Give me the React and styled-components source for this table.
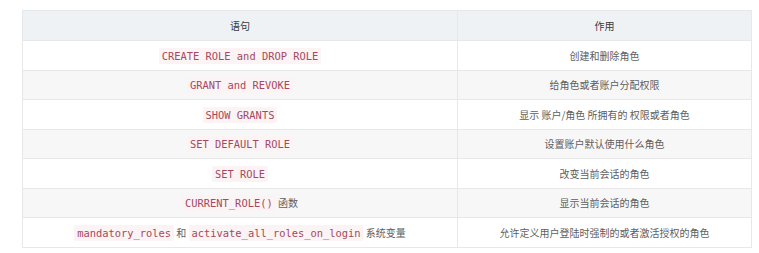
import React from 'react';
import styled, { createGlobalStyle } from 'styled-components';

const GlobalStyle = createGlobalStyle`
  html, body {
    margin: 0;
    padding: 0;
    background: #ffffff;
  }
  body {
    font-family: "Noto Sans CJK SC", "Noto Sans", sans-serif;
  }
`;

const Page = styled.div`
  padding: 10px 8px 0 22px;
`;

const Table = styled.table`
  width: 729px;
  border-collapse: collapse;
  table-layout: fixed;
  font-size: 10px;
  color: #5e5e5e;
`;

const HeadCell = styled.th`
  height: 29px;
  padding: 0 8px;
  background: #eff2f5;
  border: 1px solid #e6e9ec;
  font-weight: 400;
  color: #3a3a3a;
  text-align: center;
`;

const Row = styled.tr`
  background: ${(p) => (p.$striped ? '#f7f7f7' : '#ffffff')};
`;

const Cell = styled.td`
  height: 28.5px;
  padding: 0 8px;
  border: 1px solid #e8e8e8;
  text-align: center;
  white-space: nowrap;
`;

const Code = styled.code`
  font-family: "DejaVu Sans Mono", "Liberation Mono", monospace;
  font-size: 10.4px;
  color: #a6485f;
  background: #fbf3f4;
  padding: 2px 3px;
  border-radius: 2px;
`;

const rows = [
  { stmt: <Code>CREATE ROLE and DROP ROLE</Code>, use: '创建和删除角色' },
  { stmt: <Code>GRANT and REVOKE</Code>, use: '给角色或者账户分配权限' },
  { stmt: <Code>SHOW GRANTS</Code>, use: '显示 账户/角色 所拥有的 权限或者角色' },
  { stmt: <Code>SET DEFAULT ROLE</Code>, use: '设置账户默认使用什么角色' },
  { stmt: <Code>SET ROLE</Code>, use: '改变当前会话的角色' },
  {
    stmt: (
      <>
        <Code>CURRENT_ROLE()</Code> 函数
      </>
    ),
    use: '显示当前会话的角色',
  },
  {
    stmt: (
      <>
        <Code>mandatory_roles</Code> 和 <Code>activate_all_roles_on_login</Code> 系统变量
      </>
    ),
    use: '允许定义用户登陆时强制的或者激活授权的角色',
  },
];

const App = () => (
  <Page>
    <GlobalStyle />
    <Table>
      <colgroup>
        <col style={{ width: '435px' }} />
        <col style={{ width: '294px' }} />
      </colgroup>
      <thead>
        <tr>
          <HeadCell>语句</HeadCell>
          <HeadCell>作用</HeadCell>
        </tr>
      </thead>
      <tbody>
        {rows.map((r, i) => (
          <Row key={i} $striped={i % 2 === 1}>
            <Cell>{r.stmt}</Cell>
            <Cell>{r.use}</Cell>
          </Row>
        ))}
      </tbody>
    </Table>
  </Page>
);

export default App;
